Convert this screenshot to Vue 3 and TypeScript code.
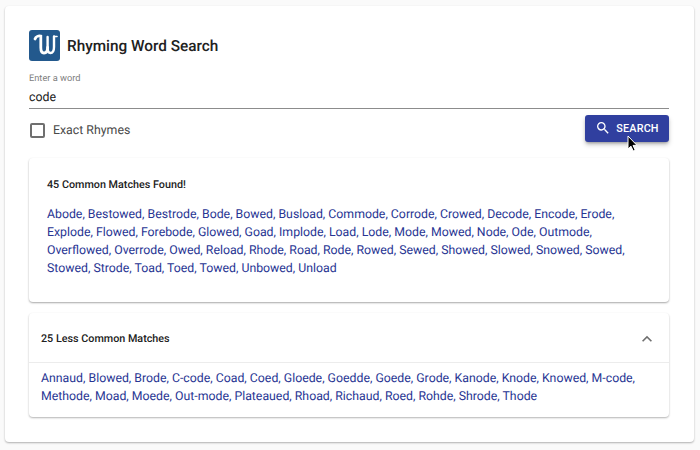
<template>
  <div class="page">
    <div class="card">
      <div class="title-row">
        <svg class="logo" viewBox="0 0 31 31" width="31" height="31">
          <rect width="31" height="31" rx="3" fill="#23598d" />
          <path d="M6 9C6.8 6.6 9.5 5.6 11.8 6.2V17.5C11.8 21.5 13 23 15 23C17 23 18.6 21.5 18.6 17.5" fill="none" stroke="#fff" stroke-width="2.8" stroke-linecap="round" />
          <path d="M18.6 7V17.5C18.6 21.5 19.8 23 21.5 23C23.8 23 25 21 25 17V6.5" fill="none" stroke="#fff" stroke-width="2.4" stroke-linecap="round" />
          <path d="M25 6.5H28" fill="none" stroke="#fff" stroke-width="1.6" stroke-linecap="round" />
        </svg>
        <h1>Rhyming Word Search</h1>
      </div>

      <div class="field">
        <label>Enter a word</label>
        <div class="value">code</div>
      </div>

      <div class="controls">
        <div class="check">
          <span class="box"></span>
          <span class="check-label">Exact Rhymes</span>
        </div>
        <button class="search">
          <svg viewBox="0 0 24 24" width="16" height="16">
            <path fill="#fff" d="M15.5 14h-.79l-.28-.27A6.47 6.47 0 0 0 16 9.5 6.5 6.5 0 1 0 9.5 16c1.61 0 3.09-.59 4.23-1.57l.27.28v.79l5 4.99L20.49 19l-4.99-5zm-6 0C7.01 14 5 11.99 5 9.5S7.01 5 9.5 5 14 7.01 14 9.5 11.99 14 9.5 14z" />
          </svg>
          SEARCH
          <svg class="cursor" viewBox="0 0 12 18" width="12" height="18">
            <path d="M1 1V14L4 11.2L6.2 16L8.2 15L6 10.4H10Z" fill="#000" stroke="#fff" stroke-width="1" />
          </svg>
        </button>
      </div>

      <section class="common">
        <h2>{{ common.length }} Common Matches Found!</h2>
        <p>{{ common.join(', ') }}</p>
      </section>

      <section class="less">
        <header>
          <h2>{{ less.length }} Less Common Matches</h2>
          <svg viewBox="0 0 24 24" width="20" height="20">
            <path fill="#6f6f6f" d="M7.41 15.41 12 10.83l4.59 4.58L18 14l-6-6-6 6z" />
          </svg>
        </header>
        <p>{{ less.join(', ') }}</p>
      </section>
    </div>
  </div>
</template>

<script setup lang="ts">
const common: string[] = [
  'Abode', 'Bestowed', 'Bestrode', 'Bode', 'Bowed', 'Busload', 'Commode', 'Corrode', 'Crowed',
  'Decode', 'Encode', 'Erode', 'Explode', 'Flowed', 'Forebode', 'Glowed', 'Goad', 'Implode',
  'Load', 'Lode', 'Mode', 'Mowed', 'Node', 'Ode', 'Outmode', 'Overflowed', 'Overrode', 'Owed',
  'Reload', 'Rhode', 'Road', 'Rode', 'Rowed', 'Sewed', 'Showed', 'Slowed', 'Snowed', 'Sowed',
  'Stowed', 'Strode', 'Toad', 'Toed', 'Towed', 'Unbowed', 'Unload'
]

const less: string[] = [
  'Annaud', 'Blowed', 'Brode', 'C-code', 'Coad', 'Coed', 'Gloede', 'Goedde', 'Goede', 'Grode',
  'Kanode', 'Knode', 'Knowed', 'M-code', 'Methode', 'Moad', 'Moede', 'Out-mode', 'Plateaued',
  'Rhoad', 'Richaud', 'Roed', 'Rohde', 'Shrode', 'Thode'
]
</script>

<style>
html,
body {
  background: #fafafa;
}
</style>

<style scoped>
.page {
  width: 700px;
  height: 450px;
  box-sizing: border-box;
  padding: 6px 6px 8px 5px;
  font-family: Roboto, sans-serif;
  overflow: hidden;
  text-rendering: geometricPrecision;
}
.card {
  height: 436px;
  box-sizing: border-box;
  padding: 24px 25px 0 24px;
  background: #fff;
  border-radius: 4px;
  box-shadow: 0 1px 2px rgba(0, 0, 0, 0.3);
}
.title-row {
  display: flex;
  align-items: center;
  gap: 7px;
  height: 31px;
}
h1 {
  margin: 0;
  font-size: 15.35px;
  font-weight: 500;
  color: #212121;
}
.field {
  margin-top: 11px;
  padding-top: 1px;
  border-bottom: 1px solid #8c8c8c;
  height: 37px;
  box-sizing: border-box;
}
.field label {
  display: block;
  font-size: 9.25px;
  line-height: 12px;
  color: #808080;
}
.value {
  font-size: 12.33px;
  line-height: 20px;
  margin-top: 3px;
  color: #212121;
}
.controls {
  display: flex;
  justify-content: space-between;
  align-items: center;
  margin-top: 5px;
  height: 28px;
}
.check {
  display: flex;
  align-items: center;
  gap: 8px;
  font-size: 12.33px;
  line-height: 18px;
  color: #4a4a4a;
  margin-left: 1px;
  padding-top: 4px;
}
.check-label {
  margin-top: 1px;
}
.box {
  width: 11px;
  height: 11px;
  border: 2px solid #6f6f6f;
  border-radius: 2px;
}
.search {
  position: relative;
  display: flex;
  align-items: center;
  justify-content: center;
  gap: 5px;
  width: 84px;
  height: 27px;
  border: 0;
  padding: 0;
  border-radius: 3px;
  background: #303f9f;
  color: #fff;
  font-family: inherit;
  font-size: 10.8px;
  font-weight: 500;
  letter-spacing: 0.2px;
  box-shadow: 0 2px 3px -1px rgba(0, 0, 0, 0.3), 0 3px 5px rgba(0, 0, 0, 0.18);
}
.cursor {
  position: absolute;
  left: 42px;
  top: 20px;
}
.common {
  margin-top: 16px;
  height: 144px;
  box-sizing: border-box;
  padding: 20px 18px;
  border-radius: 4px;
  box-shadow: 0 1px 2px rgba(0, 0, 0, 0.35);
}
h2 {
  margin: 0;
  font-size: 10.78px;
  line-height: 14px;
  font-weight: 500;
  color: #212121;
}
p {
  margin: 0;
  font-size: 12.3px;
  line-height: 18px;
  color: #283593;
}
.common p {
  margin-top: 14px;
}
.less {
  margin-top: 11px;
  height: 104px;
  border-radius: 4px;
  box-shadow: 0 1px 2px rgba(0, 0, 0, 0.3);
}
.less header {
  display: flex;
  align-items: center;
  justify-content: space-between;
  height: 50px;
  box-sizing: border-box;
  padding: 2px 12px 0 12px;
  border-bottom: 1px solid #ececec;
}
.less p {
  padding: 7px 12px;
}
</style>
